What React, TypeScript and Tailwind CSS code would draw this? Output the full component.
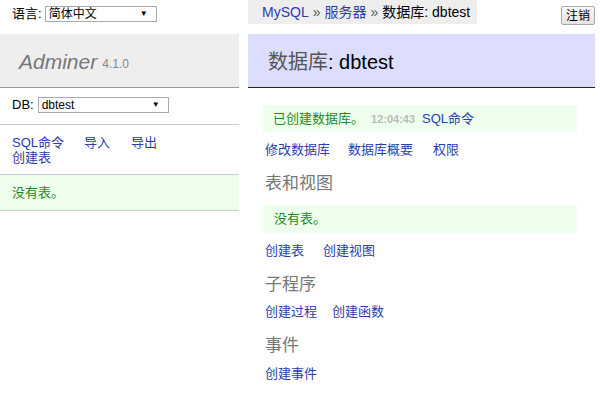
import React from 'react'

const cjk = { fontFamily: '"Liberation Sans", "Noto Sans CJK SC", sans-serif' }
const serif = { fontFamily: '"Liberation Serif", "Noto Sans CJK SC", serif' }

function Select({ value, width }: { value: string; width: string }) {
  return (
    <div className={`${width} h-[16px] border border-[#aaa] bg-white flex items-center justify-between pl-[3px] pr-[8px] text-[12px] text-black`}>
      <span>{value}</span>
      <span className="text-[8px]">▼</span>
    </div>
  )
}

function Link({ children }: { children: React.ReactNode }) {
  return <span className="text-[#2b3bb0]">{children}</span>
}

function Heading({ children, className }: { children: React.ReactNode; className: string }) {
  return (
    <div className={`${className} h-[20px] leading-[20px] pl-[2px] text-[17px] text-[#777]`} style={serif}>
      {children}
    </div>
  )
}

export default function App() {
  return (
    <div className="w-[600px] h-[394px] bg-white flex overflow-hidden text-[13px] text-[#333]" style={cjk}>
      {/* Sidebar */}
      <div className="w-[239px] shrink-0">
        <div className="h-[34px] flex items-center gap-[3px] pl-[12px] pb-[6px] text-black">
          <span>语言:</span>
          <Select value="简体中文" width="w-[112px]" />
        </div>
        <div className="h-[54px] bg-[#eee] border-b border-[#999] flex items-center gap-[5px] pl-[19px] pt-[2px]">
          <span className="italic text-[21px] text-[#777]">Adminer</span>
          <span className="text-[12px] text-[#888] pt-[4px]">4.1.0</span>
        </div>
        <div className="h-[37px] border-b border-[#ccc] flex items-center gap-[4px] pl-[12px] pb-[2px] text-black">
          <span>DB:</span>
          <Select value="dbtest" width="w-[131px]" />
        </div>
        <div className="h-[50px] border-b border-[#ccc] pl-[12px] pt-[10px] leading-[15px]">
          <div className="flex">
            <span className="w-[72px]"><Link>SQL命令</Link></span>
            <span className="w-[47px]"><Link>导入</Link></span>
            <Link>导出</Link>
          </div>
          <div><Link>创建表</Link></div>
        </div>
        <div className="h-[36px] bg-[#efe] border-b border-[#ccc] flex items-center pl-[12px] text-[#1f8a1f]">
          没有表。
        </div>
      </div>

      {/* Main */}
      <div className="flex-1 ml-[9px] mr-[5px]">
        <div className="h-[34px] flex items-start justify-between">
          <div className="h-[24px] w-[229px] bg-[#eee] flex items-center pl-[14px] text-[14px] text-black">
            <Link>MySQL</Link>
            <span className="mx-[4px] text-[#555]">»</span>
            <Link>服务器</Link>
            <span className="mx-[4px] text-[#555]">»</span>
            <span>数据库: dbtest</span>
          </div>
          <div className="mt-[6px] h-[19px] px-[4px] border border-[#aaa] rounded-[2px] bg-gradient-to-b from-[#fafafa] to-[#e3e3e3] flex items-center text-[12px] text-black">
            注销
          </div>
        </div>
        <div className="h-[54px] bg-[#ddf] border-b border-[#222] flex items-center pl-[20px] pt-[2px] text-[20px] text-black">
          <span className="text-[#555]">数据库</span>
          <span>: dbtest</span>
        </div>

        <div className="pl-[15px] pr-[18px] leading-[16px]">
          <div className="mt-[17px] h-[27px] bg-[#efe] flex items-center pl-[10px] gap-[7px]">
            <span className="text-[#1f8a1f]">已创建数据库。</span>
            <span className="text-[11px] font-bold text-[#bbb]">12:04:43</span>
            <Link>SQL命令</Link>
          </div>
          <div className="mt-[10px] flex pl-[2px]">
            <span className="w-[83px]"><Link>修改数据库</Link></span>
            <span className="w-[85px]"><Link>数据库概要</Link></span>
            <Link>权限</Link>
          </div>
          <Heading className="mt-[16px]">表和视图</Heading>
          <div className="mt-[11px] h-[28px] bg-[#efe] flex items-center pl-[11px] text-[#1f8a1f]">没有表。</div>
          <div className="mt-[10px] flex pl-[2px]">
            <span className="w-[58px]"><Link>创建表</Link></span>
            <Link>创建视图</Link>
          </div>
          <Heading className="mt-[16px]">子程序</Heading>
          <div className="mt-[9px] flex pl-[2px]">
            <span className="w-[67px]"><Link>创建过程</Link></span>
            <Link>创建函数</Link>
          </div>
          <Heading className="mt-[16px]">事件</Heading>
          <div className="mt-[10px] pl-[2px]"><Link>创建事件</Link></div>
        </div>
      </div>
    </div>
  )
}
